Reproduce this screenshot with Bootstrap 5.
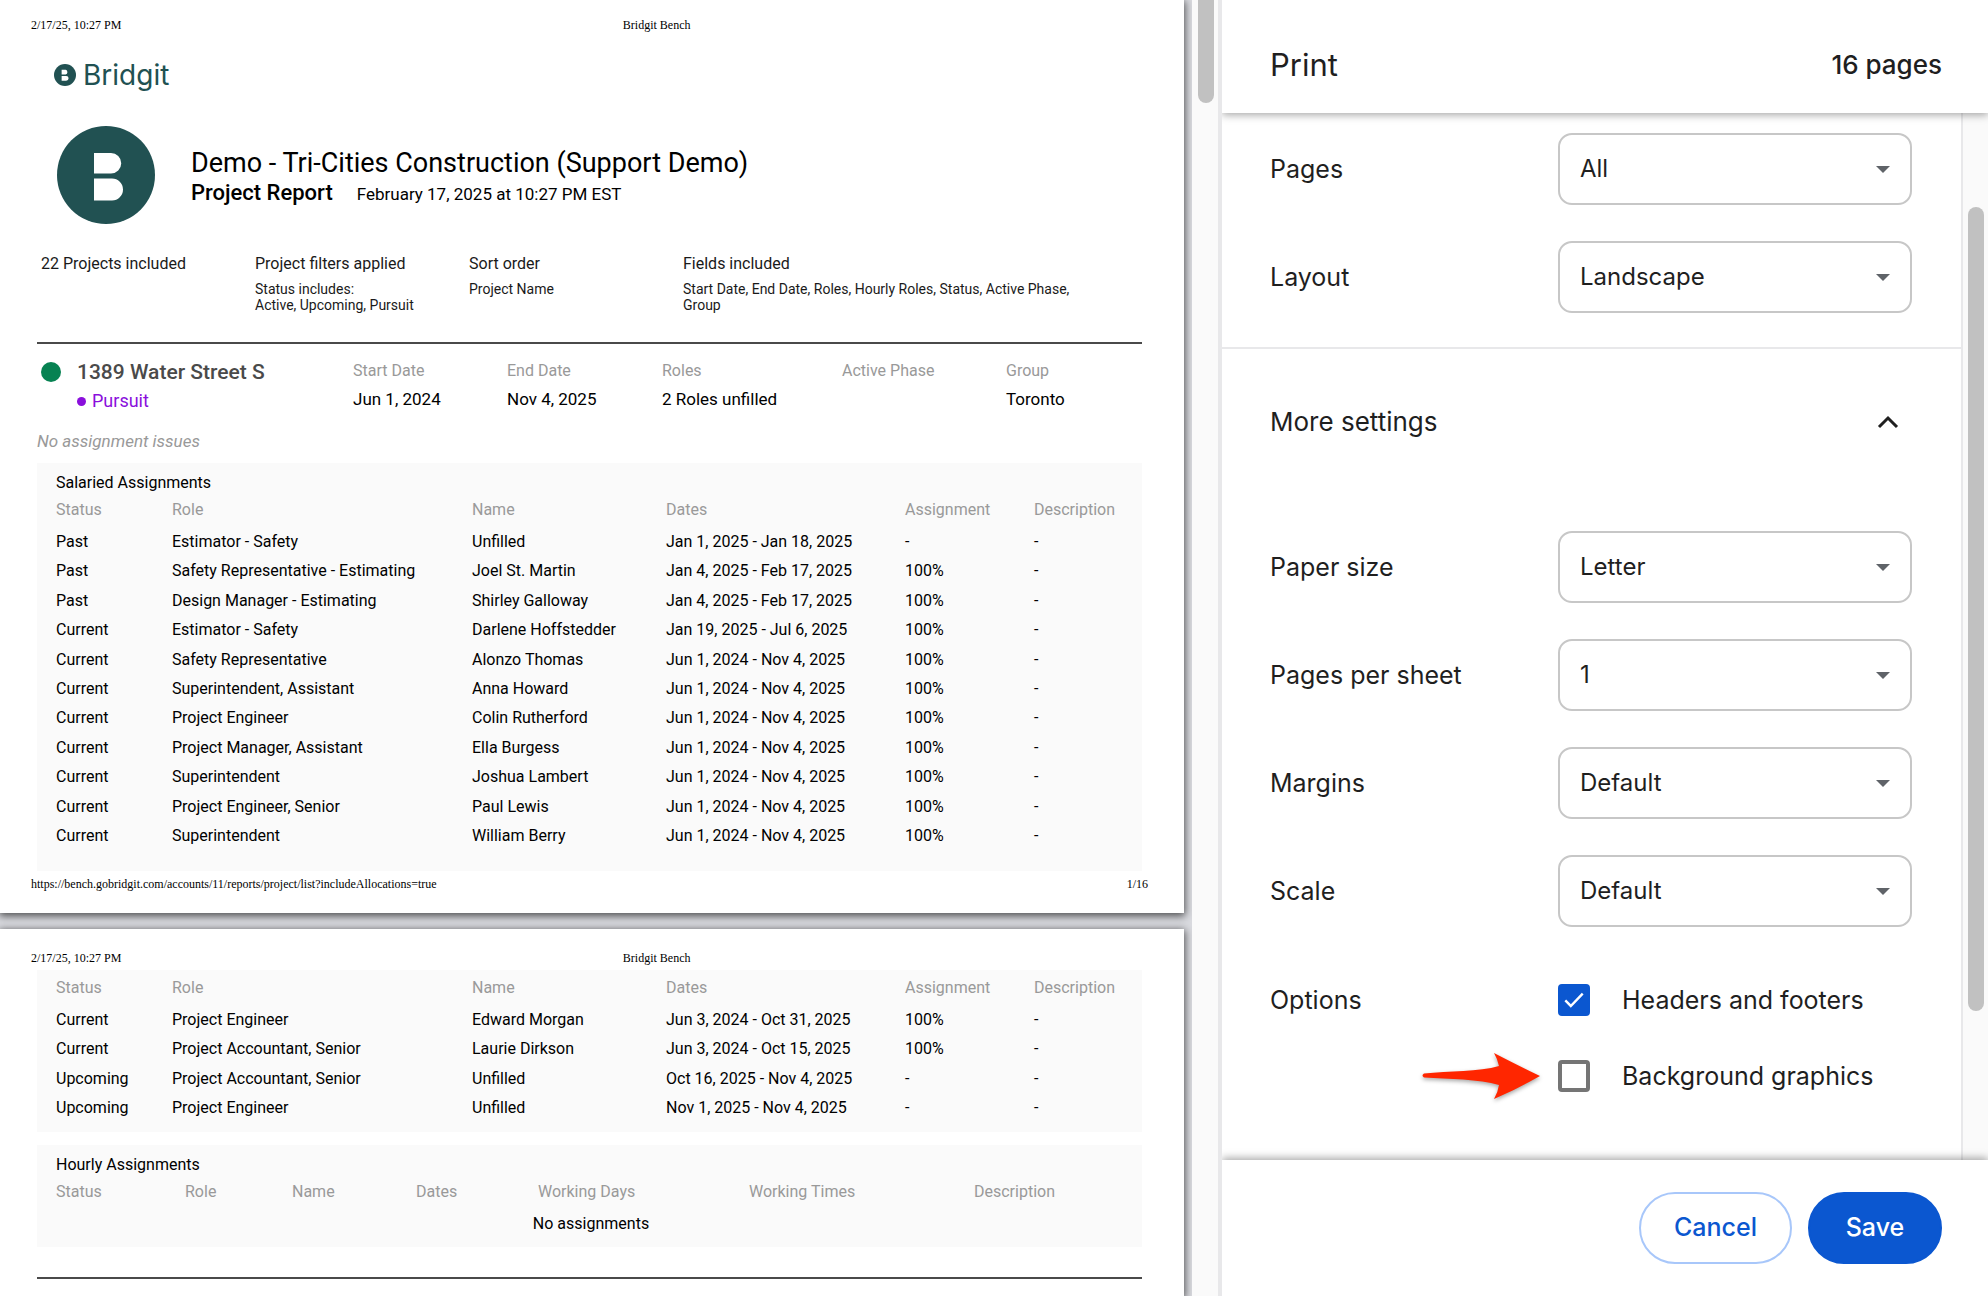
<!DOCTYPE html>
<html lang="en">
<head>
<meta charset="utf-8">
<meta name="viewport" content="width=device-width, initial-scale=1">
<title>Print - Bridgit Bench</title>
<link href="https://cdn.jsdelivr.net/npm/bootstrap@5.3.0/dist/css/bootstrap.min.css" rel="stylesheet">
<style>
  :root { --teal: #215152; --blue: #0b57d0; --line: #e8e8ea; --track: #fafafa; --thumb: #c1c1c1; }
  body { font-family: Inter, "Liberation Sans", sans-serif; color: #1f1f1f; background: #fff; }

  /* preview of the printed sheets */
  .preview { background: #dadbe0; font-family: Roboto, "Liberation Sans", sans-serif; font-size: 16px; line-height: 20px; color: #000; min-width: 0; }
  .sheet { background: #fff; box-shadow: 0 2px 8px 1px rgba(0,0,0,.65); margin-right: 8px; }
  .sheet-edge { font-family: "Liberation Serif", serif; font-size: 12px; line-height: 16px; padding-left: 31px; }
  .sheet-head { padding-top: 17px; }
  .sheet-head-next { padding: 21px 0 4px 31px; }
  .sheet-foot { padding: 5px 36px 21px 31px; }
  .sheet-body { margin: 0 42px 0 37px; }
  .logo-row { padding: 8px 0 0 17px; gap: 7px; height: 76px; }
  .logo-word { font-family: Inter, sans-serif; font-size: 28px; line-height: 36px; color: var(--teal); }
  .title-row { padding: 17px 0 0 20px; gap: 36px; }
  .title-text { padding-top: 6px; }
  .report-org { font-size: 27px; line-height: 32px; }
  .report-kind { font-size: 22px; line-height: 28px; font-weight: 500; }
  .report-date { font-size: 17px; line-height: 30px; }
  .facts { padding: 30px 0 29px 4px; color: #1a1a1a; }
  .facts > div { width: 214px; flex: none; }
  .facts > .fields { width: 400px; }
  .facts p { font-size: 14px; line-height: 16px; margin: 7px 0 0; }
  .rule { border-top: 2px solid #4a4a4a; }
  .rule-end { margin-top: 30px; }
  .project { padding: 14px 0 15px 4px; line-height: 28px; }
  .project-id { width: 312px; }
  .state-dot { width: 20px; height: 20px; border-radius: 50%; background: #078252; margin: 4px 16px 0 0; }
  .project-name { font-size: 21px; font-weight: 500; color: #4a4a4a; margin: 0; line-height: 28px; }
  .phase { font-size: 18px; color: #8a0fdc; gap: 6px; line-height: 30px; }
  .phase::before { content: ""; width: 9px; height: 9px; border-radius: 50%; background: currentColor; }
  .project dt, .report-table th { color: #999; font-weight: 400; }
  .project dl { margin: -2px 0 0; line-height: 29px; }
  .project dd { margin: 0; font-size: 17px; }
  .c-start { width: 154px; } .c-end { width: 155px; } .c-roles { width: 180px; } .c-phase { width: 164px; }
  .issues { color: #999; font-size: 17px; line-height: 20px; margin: 0 0 12px; }
  .block { background: #fafafa; padding: 10px 0 9px 19px; }
  .block-cut { padding-bottom: 20px; }
  .block-cont { padding-top: 1px; }
  .block + .block { margin-top: 13px; }
  .block h3 { font-size: 16px; line-height: 20px; margin: 0; font-weight: 400; }
  .report-table { width: 100%; table-layout: fixed; border-collapse: collapse; }
  .report-table th, .report-table td { padding: 0; line-height: 20px; white-space: nowrap; }
  .report-table th { height: 34px; vertical-align: top; padding-top: 7px; }
  .report-table td { height: 29px; }
  .rows-11 { height: 358px; }
  .rows-4 { height: 152px; }

  /* scroll tracks */
  .track { background: var(--track); flex: none; }
  .track-left { width: 30px; border-right: 4px solid var(--line); padding-left: 6px; }
  .track-right { width: 27px; border-left: 2px solid var(--line); padding: 94px 0 0 5px; }
  .thumb { width: 16px; background: var(--thumb); border-radius: 8px; }
  .thumb-left { height: 103px; border-radius: 0 0 8px 8px; }
  .thumb-right { height: 804px; }

  /* settings panel */
  .panel { width: 766px; flex: none; font-size: 25px; line-height: 32px; }
  .panel-head { padding: 16px 46px 0 48px; height: 113px; box-shadow: 0 2px 8px rgba(0,0,0,.35); z-index: 2; }
  .panel-head h1 { font-size: 31px; line-height: 40px; margin: 0; font-weight: 400; }
  .page-count { font-weight: 500; font-size: 26px; }
  .panel-foot { padding: 32px 46px; gap: 16px; box-shadow: 0 -2px 8px rgba(0,0,0,.35); z-index: 2; background: #fff; }
  .panel-body { min-height: 0; }
  .group { padding: 20px 49px 34px 48px; gap: 36px; }
  .group-more { padding-top: 36px; }
  .setting > label, .setting > .label-text { width: 288px; flex: none; }
  .setting .form-select {
    height: 72px; border: 2px solid #c7c7c7; border-radius: 14px; font-size: 24px; color: #1f1f1f; padding: 0 60px 0 20px;
    background-image: url("data:image/svg+xml,%3Csvg xmlns='http://www.w3.org/2000/svg' viewBox='0 0 14 7'%3E%3Cpath fill='%235f6368' d='M0 0h14L7 7z'/%3E%3C/svg%3E");
    background-size: 14px 7px; background-position: right 20px center;
  }
  .more { border-top: 2px solid var(--line); }
  .more-toggle { border: 0; background: none; color: inherit; padding: 53px 62px 53px 48px; line-height: 40px; font-size: 26px; }
  .options-row { padding-top: 21px; }
  .option-list { gap: 44px; }
  .option { gap: 32px; }
  .option .form-check-input { width: 32px; height: 32px; margin: 0; border: 4px solid #757575; border-radius: 4px; }
  .option .form-check-input:checked { background-color: var(--blue); border-color: var(--blue);
    background-image: url("data:image/svg+xml,%3Csvg xmlns='http://www.w3.org/2000/svg' viewBox='0 0 24 24'%3E%3Cpath fill='none' stroke='white' stroke-width='2.6' d='M2.5 12.5l6 6L21.5 5'/%3E%3C/svg%3E"); background-size: 22px 22px; }
  .pointer { right: 100%; top: 50%; transform: translateY(-50%); margin-right: 17px; filter: drop-shadow(0 2px 2px rgba(0,0,0,.35)); }
  .panel-foot .btn { height: 72px; border-radius: 36px; font-size: 25px; font-weight: 500; border-width: 2px; padding: 0; }
  .btn-cancel { width: 153px; --bs-btn-color: #0b57d0; --bs-btn-border-color: #a8c7fa; }
  .btn-save { width: 134px; --bs-btn-color: #fff; --bs-btn-bg: #0b57d0; --bs-btn-border-color: #0b57d0; }
</style>
</head>
<body>
<div class="d-flex vh-100 overflow-hidden">

  <main class="preview flex-grow-1 overflow-hidden d-flex flex-column gap-3">
    <section class="sheet flex-shrink-0">
      <div class="sheet-edge sheet-head d-flex gap-2"><span>2/17/25, 10:27 PM</span><span class="flex-fill text-center">Bridgit Bench</span></div>
      <div class="sheet-body">
        <div class="logo-row d-flex align-items-center">
          <svg width="22" height="22" viewBox="0 0 98 98" aria-hidden="true"><circle cx="49" cy="49" r="49" fill="#215152"/><path fill="#fff" d="M34 26h18a11 11 0 0 1 0 21H34zM34 53h20a11 11 0 0 1 0 22H34z"/></svg>
          <span class="logo-word">Bridgit</span>
        </div>
        <div class="title-row d-flex align-items-center">
          <svg width="98" height="98" viewBox="0 0 98 98" role="img" aria-label="Bridgit"><circle cx="49" cy="49" r="49" fill="#215152"/><path fill="#fff" d="M37 27h17a10 10 0 0 1 0 20.500H37zM37 52.500h18a11 11 0 0 1 0 22H37z"/></svg>
          <div class="title-text">
            <div class="report-org">Demo - Tri-Cities Construction (Support Demo)</div>
            <div class="d-flex gap-4"><span class="report-kind">Project Report</span><span class="report-date">February 17, 2025 at 10:27 PM EST</span></div>
          </div>
        </div>
        <div class="facts d-flex">
          <div>22 Projects included</div>
          <div>Project filters applied<p>Status includes:<br>Active, Upcoming, Pursuit</p></div>
          <div>Sort order<p>Project Name</p></div>
          <div class="fields">Fields included<p>Start Date, End Date, Roles, Hourly Roles, Status, Active Phase, Group</p></div>
        </div>
        <div class="rule"></div>
        <div class="project d-flex">
          <div class="project-id d-flex">
            <span class="state-dot"></span>
            <div><h2 class="project-name">1389 Water Street S</h2><div class="phase d-flex align-items-center">Pursuit</div></div>
          </div>
          <dl class="c-start"><dt>Start Date</dt><dd>Jun 1, 2024</dd></dl>
          <dl class="c-end"><dt>End Date</dt><dd>Nov 4, 2025</dd></dl>
          <dl class="c-roles"><dt>Roles</dt><dd>2 Roles unfilled</dd></dl>
          <dl class="c-phase"><dt>Active Phase</dt><dd></dd></dl>
          <dl><dt>Group</dt><dd>Toronto</dd></dl>
        </div>
        <p class="issues fst-italic">No assignment issues</p>
        <div class="block block-cut">
          <h3>Salaried Assignments</h3>
          <table class="report-table rows-11">
            <colgroup><col style="width:116px"><col style="width:300px"><col style="width:194px"><col style="width:239px"><col style="width:129px"><col></colgroup>
            <thead><tr><th>Status</th><th>Role</th><th>Name</th><th>Dates</th><th>Assignment</th><th>Description</th></tr></thead>
            <tbody>
              <tr><td>Past</td><td>Estimator - Safety</td><td>Unfilled</td><td>Jan 1, 2025 - Jan 18, 2025</td><td>-</td><td>-</td></tr>
              <tr><td>Past</td><td>Safety Representative - Estimating</td><td>Joel St. Martin</td><td>Jan 4, 2025 - Feb 17, 2025</td><td>100%</td><td>-</td></tr>
              <tr><td>Past</td><td>Design Manager - Estimating</td><td>Shirley Galloway</td><td>Jan 4, 2025 - Feb 17, 2025</td><td>100%</td><td>-</td></tr>
              <tr><td>Current</td><td>Estimator - Safety</td><td>Darlene Hoffstedder</td><td>Jan 19, 2025 - Jul 6, 2025</td><td>100%</td><td>-</td></tr>
              <tr><td>Current</td><td>Safety Representative</td><td>Alonzo Thomas</td><td>Jun 1, 2024 - Nov 4, 2025</td><td>100%</td><td>-</td></tr>
              <tr><td>Current</td><td>Superintendent, Assistant</td><td>Anna Howard</td><td>Jun 1, 2024 - Nov 4, 2025</td><td>100%</td><td>-</td></tr>
              <tr><td>Current</td><td>Project Engineer</td><td>Colin Rutherford</td><td>Jun 1, 2024 - Nov 4, 2025</td><td>100%</td><td>-</td></tr>
              <tr><td>Current</td><td>Project Manager, Assistant</td><td>Ella Burgess</td><td>Jun 1, 2024 - Nov 4, 2025</td><td>100%</td><td>-</td></tr>
              <tr><td>Current</td><td>Superintendent</td><td>Joshua Lambert</td><td>Jun 1, 2024 - Nov 4, 2025</td><td>100%</td><td>-</td></tr>
              <tr><td>Current</td><td>Project Engineer, Senior</td><td>Paul Lewis</td><td>Jun 1, 2024 - Nov 4, 2025</td><td>100%</td><td>-</td></tr>
              <tr><td>Current</td><td>Superintendent</td><td>William Berry</td><td>Jun 1, 2024 - Nov 4, 2025</td><td>100%</td><td>-</td></tr>
            </tbody>
          </table>
        </div>
      </div>
      <div class="sheet-edge sheet-foot d-flex justify-content-between"><span>https://bench.gobridgit.com/accounts/11/reports/project/list?includeAllocations=true</span><span>1/16</span></div>
    </section>

    <section class="sheet flex-grow-1">
      <div class="sheet-edge sheet-head-next d-flex gap-2"><span>2/17/25, 10:27 PM</span><span class="flex-fill text-center">Bridgit Bench</span></div>
      <div class="sheet-body">
        <div class="block block-cont">
          <table class="report-table rows-4">
            <colgroup><col style="width:116px"><col style="width:300px"><col style="width:194px"><col style="width:239px"><col style="width:129px"><col></colgroup>
            <thead><tr><th>Status</th><th>Role</th><th>Name</th><th>Dates</th><th>Assignment</th><th>Description</th></tr></thead>
            <tbody>
              <tr><td>Current</td><td>Project Engineer</td><td>Edward Morgan</td><td>Jun 3, 2024 - Oct 31, 2025</td><td>100%</td><td>-</td></tr>
              <tr><td>Current</td><td>Project Accountant, Senior</td><td>Laurie Dirkson</td><td>Jun 3, 2024 - Oct 15, 2025</td><td>100%</td><td>-</td></tr>
              <tr><td>Upcoming</td><td>Project Accountant, Senior</td><td>Unfilled</td><td>Oct 16, 2025 - Nov 4, 2025</td><td>-</td><td>-</td></tr>
              <tr><td>Upcoming</td><td>Project Engineer</td><td>Unfilled</td><td>Nov 1, 2025 - Nov 4, 2025</td><td>-</td><td>-</td></tr>
            </tbody>
          </table>
        </div>
        <div class="block">
          <h3>Hourly Assignments</h3>
          <table class="report-table">
            <colgroup><col style="width:129px"><col style="width:107px"><col style="width:124px"><col style="width:122px"><col style="width:211px"><col style="width:225px"><col></colgroup>
            <thead><tr><th>Status</th><th>Role</th><th>Name</th><th>Dates</th><th>Working Days</th><th>Working Times</th><th>Description</th></tr></thead>
            <tbody><tr><td colspan="7" class="text-center pe-3">No assignments</td></tr></tbody>
          </table>
        </div>
        <div class="rule rule-end"></div>
      </div>
    </section>
  </main>
  <div class="track track-left"><div class="thumb thumb-left"></div></div>

  <aside class="panel d-flex flex-column overflow-hidden">
    <header class="panel-head d-flex align-items-center justify-content-between position-relative flex-shrink-0">
      <h1>Print</h1><span class="page-count">16 pages</span>
    </header>
    <div class="panel-body d-flex flex-grow-1">
      <div class="flex-grow-1 overflow-hidden">
        <div class="group d-flex flex-column">
          <div class="setting d-flex align-items-center"><label for="pages">Pages</label><select id="pages" class="form-select"><option>All</option></select></div>
          <div class="setting d-flex align-items-center"><label for="layout">Layout</label><select id="layout" class="form-select"><option>Landscape</option></select></div>
        </div>
        <div class="more">
          <button type="button" class="more-toggle w-100 d-flex align-items-center justify-content-between" aria-expanded="true">More settings
            <svg width="22" height="14" viewBox="0 0 22 14" fill="none" stroke="#1f1f1f" stroke-width="3" aria-hidden="true"><path d="M2 12l9-9 9 9"/></svg>
          </button>
          <div class="group group-more d-flex flex-column">
            <div class="setting d-flex align-items-center"><label for="paper">Paper size</label><select id="paper" class="form-select"><option>Letter</option></select></div>
            <div class="setting d-flex align-items-center"><label for="persheet">Pages per sheet</label><select id="persheet" class="form-select"><option>1</option></select></div>
            <div class="setting d-flex align-items-center"><label for="margins">Margins</label><select id="margins" class="form-select"><option>Default</option></select></div>
            <div class="setting d-flex align-items-center"><label for="scale">Scale</label><select id="scale" class="form-select"><option>Default</option></select></div>
            <div class="setting options-row d-flex align-items-start"><span class="label-text">Options</span>
              <div class="option-list d-flex flex-column">
                <div class="option d-flex align-items-center"><input class="form-check-input" type="checkbox" id="headers" checked><label for="headers">Headers and footers</label></div>
                <div class="option d-flex align-items-center position-relative">
                  <svg class="pointer position-absolute" width="120" height="48" viewBox="0 0 120 48" aria-hidden="true"><path fill="#ff2600" d="M3 21.500C28 19 58 20 78 14Q76 6 73 1Q98 14 119 24Q96 37 73 47Q77 40 78 33C58 27 28 27 3 25.500Q0 23.500 3 21.500z"/></svg>
                  <input class="form-check-input" type="checkbox" id="bg"><label for="bg">Background graphics</label></div>
              </div>
            </div>
          </div>
        </div>
      </div>
      <div class="track track-right"><div class="thumb thumb-right"></div></div>
    </div>
    <footer class="panel-foot d-flex justify-content-end position-relative flex-shrink-0">
      <button type="button" class="btn btn-cancel">Cancel</button>
      <button type="button" class="btn btn-save">Save</button>
    </footer>
  </aside>
</div>
<script src="https://cdn.jsdelivr.net/npm/bootstrap@5.3.0/dist/js/bootstrap.bundle.min.js"></script>
</body>
</html>
